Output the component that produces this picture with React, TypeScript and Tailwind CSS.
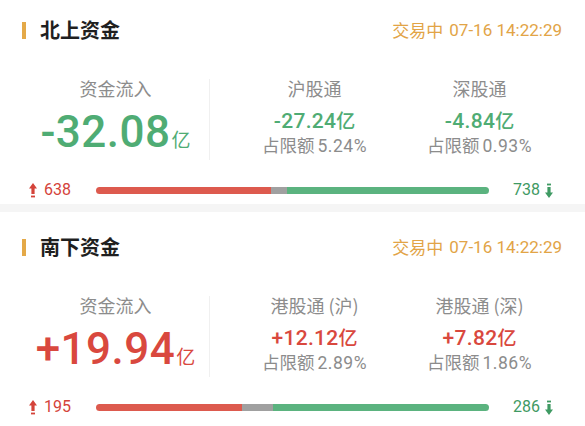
import React from "react";

const CJK = "'Noto Sans CJK SC', sans-serif";
const NUM = "Roboto, 'Noto Sans CJK SC', sans-serif";

function UpArrow() {
  return (
    <svg width="8" height="15" viewBox="0 0 8 15" className="shrink-0">
      <polygon points="4,0 8,5.5 5.6,5.5 5.6,11 2.4,11 2.4,5.5 0,5.5" fill="#d4433a" />
      <rect x="2" y="12.6" width="4" height="1.8" fill="#d4433a" />
    </svg>
  );
}

function DownArrow() {
  return (
    <svg width="8" height="15" viewBox="0 0 8 15" className="shrink-0">
      <rect x="2" y="0.6" width="4" height="1.8" fill="#3f9a63" />
      <polygon points="2.4,4 5.6,4 5.6,9.5 8,9.5 4,15 0,9.5 2.4,9.5" fill="#3f9a63" />
    </svg>
  );
}

type Sub = { name: string; value: string; pct: string };

function Section({
  title,
  flow,
  color,
  subs,
  up,
  down,
  red,
  gray,
  topPad,
}: {
  title: string;
  flow: string;
  color: string;
  subs: Sub[];
  up: string;
  down: string;
  red: number;
  gray: number;
  topPad: string;
}) {
  return (
    <div className={`bg-white ${topPad} pb-[4px]`}>
      <div className="flex h-[24px] items-center justify-between px-[22px]">
        <div className="flex items-center">
          <div className="h-[17px] w-[4px] bg-[#e4a948]" />
          <div
            className="ml-[14px] text-[20px] font-bold leading-[24px] text-[#1f1f1f]"
            style={{ fontFamily: CJK }}
          >
            {title}
          </div>
        </div>
        <div className="mr-[1px] flex items-center text-[17px] leading-[24px] text-[#e2a446]">
          <span style={{ fontFamily: CJK }}>交易中</span>
          <span className="ml-[6px] text-[17px]" style={{ fontFamily: NUM }}>
            07-16 14:22:29
          </span>
        </div>
      </div>

      <div className="mt-[34px] flex px-[22px]">
        <div className="flex w-[187px] flex-col items-center">
          <div
            className="h-[24px] text-[18px] leading-[24px] text-[#8c8c8c]"
            style={{ fontFamily: CJK }}
          >
            资金流入
          </div>
          <div className="mt-[10px] flex h-[44px] items-baseline" style={{ color }}>
            <span
              className="text-[44px] font-medium leading-[44px] tracking-[0.5px]"
              style={{ fontFamily: NUM }}
            >
              {flow}
            </span>
            <span className="ml-[1px] text-[19px] leading-[44px]" style={{ fontFamily: CJK }}>
              亿
            </span>
          </div>
        </div>
        <div className="mt-[3px] h-[81px] w-[1px] bg-[#f0f0f0]" />
        <div className="flex pl-[22px]">
          {subs.map((s) => (
            <div key={s.name} className="flex w-[165px] flex-col items-center">
              <div
                className="h-[24px] text-[18px] leading-[24px] text-[#8c8c8c]"
                style={{ fontFamily: CJK }}
              >
                {s.name}
              </div>
              <div className="mt-[8px] flex h-[24px] items-baseline" style={{ color }}>
                <span
                  className="text-[21px] font-medium leading-[24px] tracking-[0.3px]"
                  style={{ fontFamily: NUM }}
                >
                  {s.value}
                </span>
                <span className="text-[19px] font-medium leading-[24px]" style={{ fontFamily: CJK }}>
                  亿
                </span>
              </div>
              <div className="mt-[2px] flex h-[22px] items-baseline text-[17.5px] leading-[22px] text-[#8c8c8c]">
                <span style={{ fontFamily: CJK }}>占限额</span>
                <span className="ml-[3px] tracking-[0.5px]" style={{ fontFamily: NUM }}>
                  {s.pct}
                </span>
              </div>
            </div>
          ))}
        </div>
      </div>

      <div className="mt-[20px] flex h-[20px] items-center pl-[29px]">
        <div className="flex w-[56px] items-center">
          <UpArrow />
          <span
            className="ml-[7px] text-[16px] leading-[20px] text-[#d4433a]"
            style={{ fontFamily: NUM }}
          >
            {up}
          </span>
        </div>
        <div className="ml-[11px] flex h-[7px] w-[393px] overflow-hidden rounded-full">
          <div className="h-full bg-[#dd5a4e]" style={{ width: red }} />
          <div className="h-full bg-[#a0a0a0]" style={{ width: gray }} />
          <div className="h-full flex-1 bg-[#5bb37f]" />
        </div>
        <div className="ml-[24px] flex items-center">
          <span className="text-[16px] leading-[20px] text-[#3f9a63]" style={{ fontFamily: NUM }}>
            {down}
          </span>
          <span className="ml-[5px]">
            <DownArrow />
          </span>
        </div>
      </div>
    </div>
  );
}

export default function App() {
  return (
    <div className="h-[426px] w-[585px] overflow-hidden bg-white">
      <Section
        title="北上资金"
        flow="-32.08"
        color="#4fac74"
        subs={[
          { name: "沪股通", value: "-27.24", pct: "5.24%" },
          { name: "深股通", value: "-4.84", pct: "0.93%" },
        ]}
        up="638"
        down="738"
        red={175}
        gray={16}
        topPad="pt-[18px]"
      />
      <div className="h-[8px] bg-[#f5f5f5]" />
      <Section
        title="南下资金"
        flow="+19.94"
        color="#d9483e"
        subs={[
          { name: "港股通 (沪)", value: "+12.12", pct: "2.89%" },
          { name: "港股通 (深)", value: "+7.82", pct: "1.86%" },
        ]}
        up="195"
        down="286"
        red={146}
        gray={31}
        topPad="pt-[23px]"
      />
    </div>
  );
}
